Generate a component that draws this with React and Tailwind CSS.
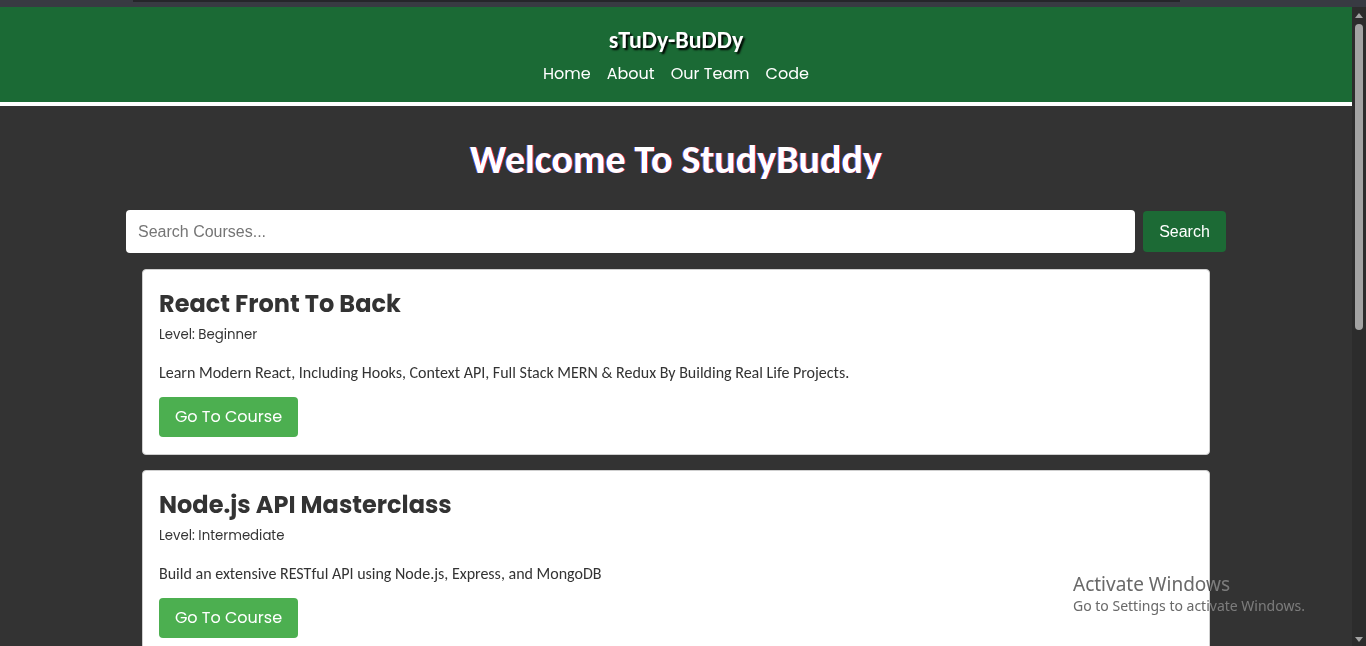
import React, { useState } from 'react';

const courses = [
  {
    title: 'React Front To Back',
    level: 'Beginner',
    description:
      'Learn Modern React, Including Hooks, Context API, Full Stack MERN & Redux By Building Real Life Projects.',
  },
  {
    title: 'Node.js API Masterclass',
    level: 'Intermediate',
    description: 'Build an extensive RESTful API using Node.js, Express, and MongoDB',
  },
  {
    title: 'Modern JavaScript From The Beginning',
    level: 'Beginner',
    description: 'Learn and build projects with pure JavaScript (No frameworks or libraries)',
  },
];

const poppins = "font-['Poppins','Open_Sans','Noto_Sans',sans-serif]";
const calibri = "font-['Calibri','Lato','Liberation_Sans',sans-serif]";

const CourseCard = ({ course }) => (
  <div className="bg-white border border-[#cfcfcf] rounded px-4 pt-4 pb-[17px] text-[#333]">
    <h2 className={`${poppins} font-bold text-[24px] leading-[30px] mt-[3px]`}>
      {course.title}
    </h2>
    <p className={`${poppins} text-[13.3px] leading-[18px] mt-[7px]`}>Level: {course.level}</p>
    <p className={`${calibri} text-[16px] leading-[20px] mt-[19px]`}>{course.description}</p>
    <button
      className={`${poppins} mt-[14px] bg-[#4caf50] text-white text-[16px] rounded h-[40px] w-[139px]`}
    >
      Go To Course
    </button>
  </div>
);

const FakeScrollbar = () => (
  <div className="w-[14px] shrink-0 bg-[#2c2c2c] flex flex-col items-center">
    <div className="mt-[6px] w-0 h-0 border-l-[4px] border-r-[4px] border-b-[5px] border-l-transparent border-r-transparent border-b-[#a3a3a3]" />
    <div className="mt-[6px] w-[8px] h-[306px] rounded-full bg-[#a3a3a3]" />
    <div className="flex-1" />
    <div className="mb-[4px] w-0 h-0 border-l-[4px] border-r-[4px] border-t-[5px] border-l-transparent border-r-transparent border-t-[#a3a3a3]" />
  </div>
);

export default function App() {
  const [query, setQuery] = useState('');

  return (
    <div className="h-[646px] overflow-hidden bg-[#333] flex flex-col relative">
      {/* browser strip */}
      <div className="h-[7px] shrink-0 bg-[#383a42] relative">
        <div className="absolute left-[133px] right-[186px] top-0 h-[2px] bg-[#25262a]" />
      </div>

      <div className="flex flex-1 min-h-0">
        <div className="flex-1 min-w-0 overflow-hidden">
          <header className="bg-[#1b6a35] border-b-[4px] border-white h-[99px] flex flex-col items-center">
            <h1
              className={`${calibri} text-white font-bold text-[24px] leading-[28px] mt-[19px] [text-shadow:2px_2px_2px_#000]`}
            >
              sTuDy-BuDDy
            </h1>
            <nav className={`${poppins} flex gap-[16px] text-white text-[16px] mt-[8px]`}>
              <a href="#">Home</a>
              <a href="#">About</a>
              <a href="#">Our Team</a>
              <a href="#">Code</a>
            </nav>
          </header>

          <main className="max-w-[1100px] mx-auto">
            <h1
              className={`${calibri} text-center text-white font-bold text-[40px] leading-[46px] mt-[31px] [text-shadow:1px_0_0_#e33,-1px_0_0_#36f]`}
            >
              Welcome To StudyBuddy
            </h1>

            <div className="flex items-center gap-2 mt-[27px]">
              <input
                value={query}
                onChange={(e) => setQuery(e.target.value)}
                placeholder="Search Courses..."
                className="flex-1 h-[43px] rounded bg-white px-3 text-[16px] font-['Liberation_Sans',Arial,sans-serif] text-[#333] placeholder:text-[#757575] outline-none"
              />
              <button className="h-[41px] w-[83px] rounded bg-[#1c6a35] text-white text-[16px] font-['Liberation_Sans',Arial,sans-serif]">
                Search
              </button>
            </div>

            <div className="flex flex-col gap-[15px] mx-4 mt-4">
              {courses.map((c) => (
                <CourseCard key={c.title} course={c} />
              ))}
            </div>
          </main>
        </div>
        <FakeScrollbar />
      </div>

      {/* windows watermark */}
      <div className="absolute left-[1073px] top-[573px] text-[rgba(200,200,200,0.75)] font-['Noto_Sans','Open_Sans',sans-serif] pointer-events-none mix-blend-difference">
        <div className="text-[19px] leading-[23px]">Activate Windows</div>
        <div className="text-[14px] leading-[20px]">Go to Settings to activate Windows.</div>
      </div>
    </div>
  );
}
